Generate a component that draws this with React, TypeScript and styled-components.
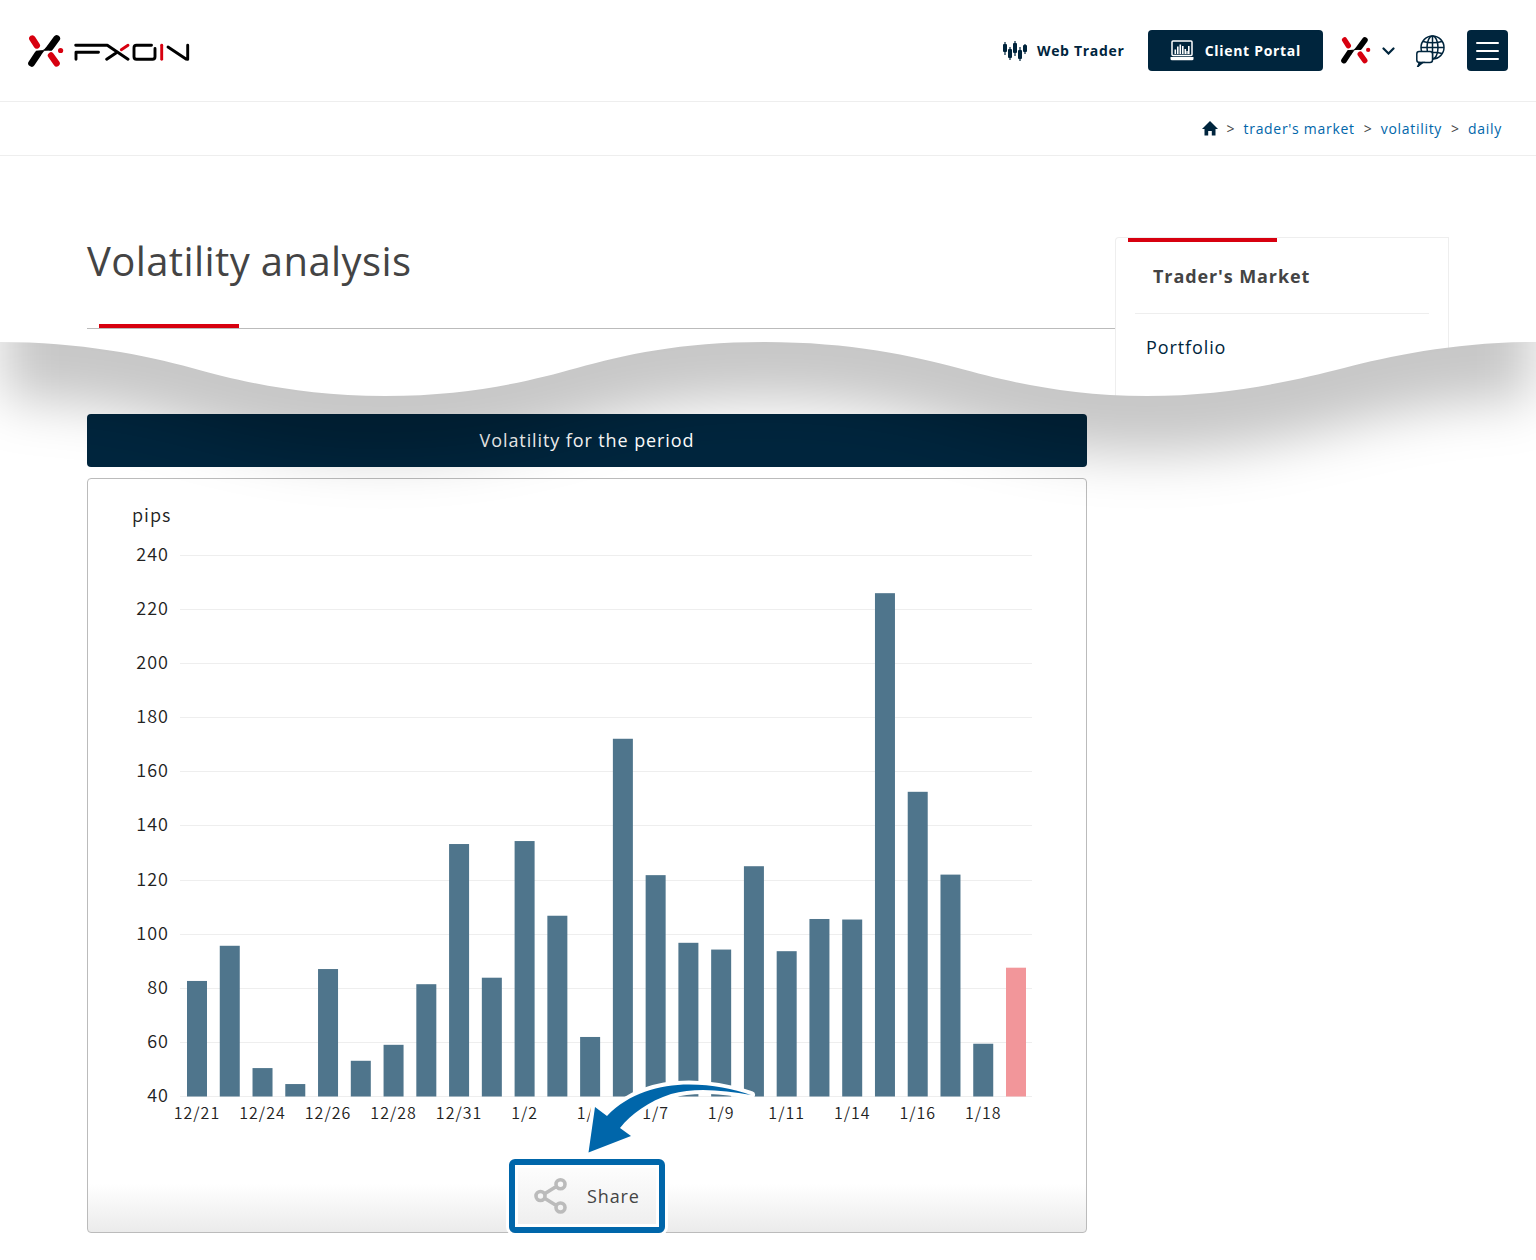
import React from "react";
import styled, { createGlobalStyle } from "styled-components";

const GlobalStyle = createGlobalStyle`
  *, *::before, *::after { box-sizing: border-box; }
  body {
    margin: 0;
    background: #fff;
    color: #444;
    font-family: "Open Sans", "Noto Sans", sans-serif;
  }
  a { text-decoration: none; }
  a, button, h2 { letter-spacing: 0.05em; }
  button { font: inherit; cursor: pointer; }
`;

const navy = "#00253d";
const red = "#d7000f";
const blue = "#0066aa";

const Page = styled.div`
  position: relative;
  padding-bottom: 27px;
  overflow: hidden;
`;

const Header = styled.header`
  display: flex;
  align-items: center;
  justify-content: space-between;
  height: 102px;
  padding: 0 28px;
  border-bottom: 1px solid #eee;
`;

const HomeLink = styled.a`
  display: flex;
  align-items: center;
  gap: 10px;
`;

const Tools = styled.nav`
  display: flex;
  align-items: center;
`;

const WebTrader = styled.a`
  display: flex;
  align-items: center;
  gap: 10px;
  margin-right: 23px;
  color: ${navy};
  font-size: 14px;
  font-weight: 700;
`;

const Portal = styled.a`
  display: flex;
  align-items: center;
  gap: 11px;
  height: 41px;
  margin-right: 18px;
  padding: 0 22px;
  border-radius: 4px;
  background: ${navy};
  color: #fff;
  font-size: 14px;
  font-weight: 700;
`;

const PlainButton = styled.button<{ $after: number }>`
  display: flex;
  align-items: center;
  gap: 11px;
  margin: 0 ${(p) => p.$after}px 0 0;
  padding: 0;
  border: 0;
  background: none;
`;

const MenuButton = styled.button`
  display: flex;
  flex-direction: column;
  align-items: center;
  justify-content: center;
  gap: 6px;
  width: 41px;
  height: 41px;
  padding: 0;
  border: 0;
  border-radius: 4px;
  background: ${navy};
`;

const MenuLine = styled.span`
  width: 23px;
  height: 2px;
  border-radius: 1px;
  background: #fff;
`;

const Breadcrumb = styled.nav`
  display: flex;
  align-items: center;
  justify-content: flex-end;
  gap: 9px;
  height: 54px;
  padding: 0 34px;
  border-bottom: 1px solid #eee;
  font-size: 14px;
  a { display: flex; color: ${blue}; }
`;

const Separator = styled.span`
  font-size: 14px;
`;

const Intro = styled.section`
  display: grid;
  grid-template-columns: minmax(0, 1fr) 334px;
  align-items: start;
  height: 240px;
  padding: 81px 87px 0;
`;

const TitleBlock = styled.div`
  height: 92px;
  border-bottom: 1px solid #bbb;
`;

const Title = styled.h1`
  margin: 0;
  height: 87px;
  font-size: 40px;
  font-weight: 400;
  letter-spacing: 0.01em;
  line-height: 48px;
`;

const Accent = styled.div<{ $width: number }>`
  width: ${(p) => p.$width}px;
  height: 4px;
  margin-left: 12px;
  background: ${red};
`;

const Sidebar = styled.aside`
  height: 159px;
  border: 1px solid #eee;
  border-bottom: 0;
  border-radius: 4px 0 0 0;
`;

const SideHeading = styled.h2`
  margin: 0 19px;
  padding: 20px 18px 23px;
  border-bottom: 1px solid #eee;
  font-size: 18px;
  font-weight: 700;
  line-height: 28px;
`;

const SideLink = styled.a`
  display: block;
  padding: 19px 30px;
  color: ${navy};
  font-size: 18px;
  line-height: 28px;
`;

const WaveDivider = styled.svg`
  position: absolute;
  z-index: 2;
  top: 320px;
  left: 0;
  width: 100%;
  height: 220px;
  pointer-events: none;
`;

const Report = styled.main`
  display: grid;
  grid-template-columns: minmax(0, 1fr) 334px;
  column-gap: 28px;
  padding: 18px 87px 0;
`;

const ReportColumn = styled.div`
  display: flex;
  flex-direction: column;
  gap: 11px;
`;

const Banner = styled.h2`
  margin: 0;
  border-radius: 4px;
  background: ${navy};
  color: #fff;
  font-size: 18px;
  font-weight: 400;
  line-height: 53px;
  text-align: center;
`;

const Panel = styled.section`
  position: relative;
  display: flex;
  flex-direction: column;
  align-items: center;
  gap: 34px;
  border: 1px solid #bbb;
  border-radius: 4px;
  background: linear-gradient(to top, #ebebeb, #fff 48px);
`;

const ChartSvg = styled.svg`
  display: block;
  width: 100%;
  height: auto;
  font-family: "Noto Sans CJK JP", "Noto Sans", sans-serif;
  font-weight: 350;
  letter-spacing: 1px;
  fill: #222;
`;

const ArrowSvg = styled.svg`
  position: absolute;
  bottom: 76px;
  left: calc(50% - 10px);
  width: 180px;
  height: 80px;
`;

const ShareArea = styled.div`
  position: relative;
  display: flex;
  margin-bottom: -1px;
`;

const ShareButton = styled.button`
  display: flex;
  align-items: center;
  gap: 19px;
  width: 156px;
  height: 74px;
  padding: 0 19px;
  border: 6px solid ${blue};
  border-radius: 6px;
  background: linear-gradient(to top, #eee, #fcfcfc 56px);
  box-shadow: 0 0 0 3px #fff, inset 0 0 0 3px #fff;
  color: #444;
  font-size: 18px;
`;

const Mark = ({ width }: { width: number }) => (
  <svg width={width} viewBox="0 0 36 32" fill="none" strokeLinecap="round" aria-hidden="true">
    <path d="M4.300 3.500L8.800 10.500M23 20.500L28.600 28.300" stroke={red} strokeWidth="6.400" />
    <path d="M28.700 3.600L22.500 12M9.500 19.500L3.600 28.300" stroke="#000" strokeWidth="6.800" />
    <path d="M19.500 10.500L16.500 14Q15.500 15.200 12.500 16L24 15.400L25 12ZM12.500 21L15.500 16.800Q16.500 15.400 19.500 14.600L8 15.800L7 18Z" fill="#000" />
    <circle cx="32.600" cy="15.500" r="2.600" fill={red} />
  </svg>
);

const Wordmark = () => (
  <svg width="116" height="20" viewBox="0 0 116 20" fill="none" strokeWidth="2.900" strokeLinecap="round" strokeLinejoin="round" role="img" aria-label="FXON">
    <path d="M1.700 4.300H33.300L54 18.300M2 18.300V11.300H24.500M32.700 18.300L42 12" stroke="#000" />
    <path d="M47.300 8.800L54 4.300" stroke={red} />
    <path d="M77.500 4.300H62.500Q60 4.300 60 6.800V15.800Q60 18.300 62.500 18.300H78.500Q81 18.300 81 15.800V7.500" stroke="#000" />
    <path d="M87.700 4.300V18.300" stroke={red} />
    <path d="M94 6L112 18L113.700 18.300V4.300" stroke="#000" />
  </svg>
);

const candles = [
  { x: 2, top: 1, bottom: 14, open: 3, close: 11 },
  { x: 7, top: 6, bottom: 19, open: 8, close: 17 },
  { x: 12, top: 0, bottom: 15, open: 2, close: 12 },
  { x: 17, top: 6, bottom: 20, open: 9, close: 18 },
  { x: 22, top: 3, bottom: 13, open: 4, close: 11 },
];

const CandleIcon = () => (
  <svg width="24" height="20" viewBox="0 0 24 20" fill={navy} aria-hidden="true">
    {candles.map((c) => (
      <g key={c.x}>
        <rect x={c.x - 2} y={c.open} width="4" height={c.close - c.open} rx="1" />
        <rect x={c.x - 0.6} y={c.top} width="1.200" height={c.bottom - c.top} />
      </g>
    ))}
  </svg>
);

const LaptopIcon = () => (
  <svg width="24" height="21" viewBox="0 0 24 21" aria-hidden="true">
    <rect x="2" y="1" width="20" height="14.500" rx="1" fill="none" stroke="#fff" strokeWidth="1.500" />
    <path d="M.5 17H23.500V19Q23.500 20.300 22 20.300H2Q.5 20.300 .5 19Z" fill="#fff" />
    <path d="M4.500 9.500h1.600v4.500h-1.600zM7 6.500h1.600v7.500h-1.600zM9.500 4.500h1.600v9.500h-1.600zM12 6h1.600v8h-1.600zM14.500 9h1.600v5h-1.600zM16.500 11h1.200v3h-1.200zM18 6h1.600v8h-1.600z" fill="#fff" />
  </svg>
);

const GlobeIcon = () => (
  <svg width="29" height="32" viewBox="0 0 29 32" fill="none" stroke={navy} strokeWidth="1.500" aria-hidden="true">
    <circle cx="16.500" cy="12.500" r="11.500" />
    <ellipse cx="16.500" cy="12.500" rx="5.500" ry="11.500" />
    <path d="M16.500 1V24M5 12.500H28M7 6.500Q16.500 9 26 6.500M7 18.500Q16.500 16 26 18.500" />
    <path d="M3 16.500H14Q16.500 16.500 16.500 19V25Q16.500 27.500 14 27.500H6L2.500 31L3.500 27.500Q.8 27.500 .8 25V19Q.8 16.500 3 16.500Z" fill="#fff" />
    <path d="M7 27.500L2 31L3.500 27.500Z" fill={navy} />
  </svg>
);

const HouseIcon = () => (
  <svg width="16" height="15" viewBox="0 0 16 15" fill={navy} aria-hidden="true">
    <path d="M8 0L16 8H13.500V14.500H9.800V10H6.200V14.500H2.500V8H0Z" />
  </svg>
);

const ShareIcon = () => (
  <svg width="34" height="38" viewBox="0 0 34 38" fill="none" stroke="#bbb" strokeWidth="3.600" aria-hidden="true">
    <path d="M11 16.500L21.500 10M11 21.500L21.500 28" />
    <circle cx="6.500" cy="19" r="4.500" />
    <circle cx="26.500" cy="7.200" r="4.500" />
    <circle cx="26.500" cy="30.500" r="4.500" />
  </svg>
);

const wave = (dx: number, dy: number) =>
  `M${dx} ${22 + dy}C80 ${22 + dy} 145 ${35 + dy} 192 ${48 + dy}S300 ${76 + dy} 385 ${76 + dy}S530 ${61 + dy} 577 ${48 + dy}S680 ${22 + dy} 765 ${22 + dy}S914 ${36 + dy} 958 ${48 + dy}S1065 ${76 + dy} 1147 ${76 + dy}S1297 ${60 + dy} 1344 ${48 + dy}S1456 ${22 + dy} ${1536 - dx} ${22 + dy}`;

const Wave = () => (
  <WaveDivider viewBox="0 0 1536 220" preserveAspectRatio="none" aria-hidden="true">
    <defs>
      <clipPath id="below">
        <path d={`${wave(0, 0)}V220H0Z`} />
      </clipPath>
      <filter id="soft" filterUnits="userSpaceOnUse" x="-100" y="-200" width="1736" height="520">
        <feGaussianBlur stdDeviation="26" />
      </filter>
    </defs>
    <path d={`${wave(0, 0)}V78H0Z`} fill="#fff" />
    <g clipPath="url(#below)">
      <path d={`${wave(4, 58)}V-100H4Z`} fill="#000" fillOpacity="0.22" filter="url(#soft)" />
    </g>
  </WaveDivider>
);

const bars: { pips: number; day?: string }[] = [
  { pips: 82.7, day: "12/21" }, { pips: 95.7 },
  { pips: 50.5, day: "12/24" }, { pips: 44.6 },
  { pips: 87.1, day: "12/26" }, { pips: 53.2 },
  { pips: 59.1, day: "12/28" }, { pips: 81.5 },
  { pips: 133.3, day: "12/31" }, { pips: 83.9 },
  { pips: 134.4, day: "1/2" }, { pips: 106.8 },
  { pips: 62, day: "1/4" }, { pips: 172.2 },
  { pips: 121.8, day: "1/7" }, { pips: 96.8 },
  { pips: 94.3, day: "1/9" }, { pips: 125.1 },
  { pips: 93.7, day: "1/11" }, { pips: 105.6 },
  { pips: 105.4, day: "1/14" }, { pips: 226 },
  { pips: 152.6, day: "1/16" }, { pips: 122 },
  { pips: 59.5, day: "1/18" }, { pips: 87.6 },
];

const ticks = [240, 220, 200, 180, 160, 140, 120, 100, 80, 60, 40];
const yFor = (pips: number) => 617.5 - (pips - 40) * 2.706;
const xFor = (index: number) => 109 + index * 32.76;

const VolatilityChart = () => (
  <ChartSvg viewBox="0 0 998 646" role="img" aria-label="Volatility for the period, in pips">
    <text x="44" y="43" fontSize="18">pips</text>
    {ticks.map((t) => (
      <g key={t}>
        <path d={`M92 ${Math.floor(yFor(t)) + 0.5}H944`} stroke="#eee" />
        <text x="81" y={Math.floor(yFor(t)) + 6} fontSize="18" textAnchor="end">{t}</text>
      </g>
    ))}
    {bars.map((b, i) => (
      <g key={i}>
        <rect x={xFor(i) - 10} y={yFor(b.pips)} width="20" height={617.5 - yFor(b.pips)} fill={i === bars.length - 1 ? "#f2969a" : "#4f758c"} />
        {b.day && <text x={xFor(i)} y="640" fontSize="16" textAnchor="middle">{b.day}</text>}
      </g>
    ))}
  </ChartSvg>
);

const Arrow = () => (
  <ArrowSvg viewBox="0 0 180 80" aria-hidden="true">
    <path
      d="M11.500 76.500L18 31L30 40C52 17 82 8.500 112 8.500C136 8.500 156 13 174 19C146 14 118 11 94 18C72 25 54 38 43 52L54 60Z"
      fill={blue} stroke="#fff" strokeWidth="8" strokeLinejoin="round" paintOrder="stroke"
    />
  </ArrowSvg>
);

export default function App() {
  return (
    <>
      <GlobalStyle />
      <Page>
        <Header>
          <HomeLink href="#" aria-label="FXON home">
            <Mark width={36} />
            <Wordmark />
          </HomeLink>
          <Tools aria-label="Tools">
            <WebTrader href="#"><CandleIcon />Web Trader</WebTrader>
            <Portal href="#"><LaptopIcon />Client Portal</Portal>
            <PlainButton $after={21} type="button" aria-label="Choose site">
              <Mark width={30} />
              <svg width="13" height="8" viewBox="0 0 13 8" fill="none" stroke={navy} strokeWidth="2.200" strokeLinecap="round" aria-hidden="true">
                <path d="M1.500 1.500L6.500 6.500L11.500 1.500" />
              </svg>
            </PlainButton>
            <PlainButton $after={22} type="button" aria-label="Language"><GlobeIcon /></PlainButton>
            <MenuButton type="button" aria-label="Menu">
              <MenuLine /><MenuLine /><MenuLine />
            </MenuButton>
          </Tools>
        </Header>
        <Breadcrumb aria-label="Breadcrumb">
          <a href="#" aria-label="Home"><HouseIcon /></a>
          <Separator>&gt;</Separator>
          <a href="#">trader's market</a>
          <Separator>&gt;</Separator>
          <a href="#">volatility</a>
          <Separator>&gt;</Separator>
          <a href="#">daily</a>
        </Breadcrumb>
        <Intro>
          <TitleBlock>
            <Title>Volatility analysis</Title>
            <Accent $width={140} />
          </TitleBlock>
          <Sidebar>
            <Accent $width={149} />
            <SideHeading>Trader's Market</SideHeading>
            <SideLink href="#">Portfolio</SideLink>
          </Sidebar>
        </Intro>
        <Wave />
        <Report>
          <ReportColumn>
            <Banner>Volatility for the period</Banner>
            <Panel>
              <VolatilityChart />
              <ShareArea>
                <ShareButton type="button"><ShareIcon />Share</ShareButton>
              </ShareArea>
              <Arrow />
            </Panel>
          </ReportColumn>
        </Report>
      </Page>
    </>
  );
}
